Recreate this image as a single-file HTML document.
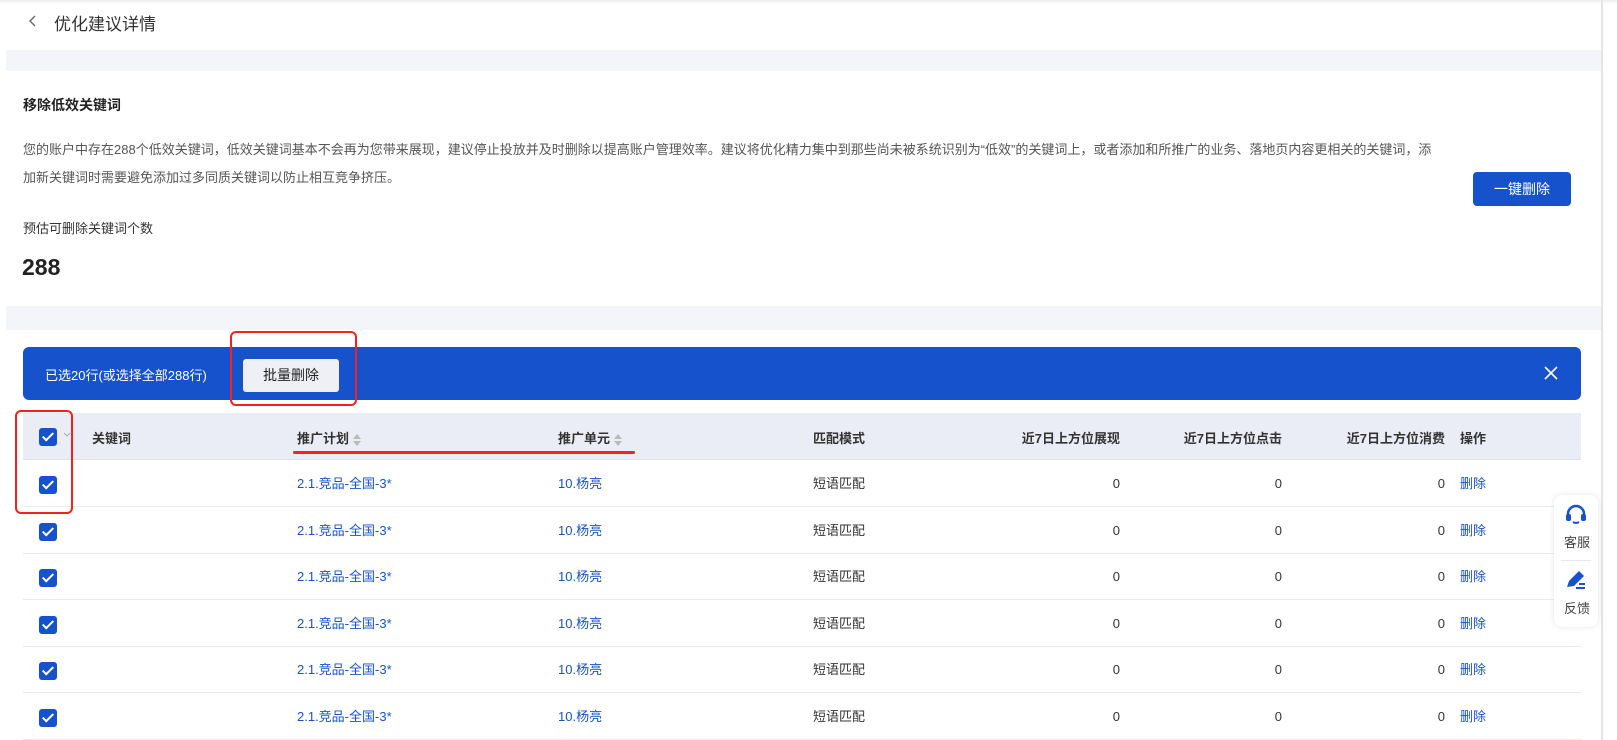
<!DOCTYPE html>
<html><head><meta charset="utf-8"><style>
*{margin:0;padding:0;box-sizing:border-box}
body{width:1617px;height:740px;overflow:hidden;background:#fff;font-family:"Liberation Sans","Noto Sans CJK SC",sans-serif;color:#333;position:relative}
.abs{position:absolute}
.band{position:absolute;left:6px;width:1595px;background:#f4f5f9}
.cb{position:absolute;width:18px;height:18px;background:#1652cc;border-radius:3px}
.cb:after{content:"";position:absolute;left:6px;top:2px;width:4px;height:9px;border:solid #fff;border-width:0 2px 2px 0;transform:rotate(45deg)}
.row{position:absolute;left:23px;width:1566px;height:47px;border-bottom:1px solid #e8ebf2;font-size:13px}
.row span{position:absolute;top:15px;line-height:17px}
.blue{color:#1652cc}
.num{text-align:right;width:100px}
.red{position:absolute;border:2px solid #f0241c;border-radius:6px}
.sort{display:inline-block;vertical-align:middle;margin-left:4px}
</style></head><body>
<div class="abs" style="left:0;top:0;width:1617px;height:4px;background:linear-gradient(#eee,#fff)"></div>
<svg class="abs" style="left:28px;top:14px" width="10" height="14"><path d="M7 2L2 7L7 12" fill="none" stroke="#666" stroke-width="1.4"/></svg>
<div class="abs" style="left:54px;top:10px;font-size:17px;color:#333">优化建议详情</div>
<div class="band" style="top:50px;height:21px"></div>
<div class="abs" style="left:23px;top:95px;font-size:14px;font-weight:bold;color:#222">移除低效关键词</div>
<div class="abs" style="left:23px;top:136px;width:1415px;font-size:13px;line-height:28px;color:#555">您的账户中存在288个低效关键词，低效关键词基本不会再为您带来展现，建议停止投放并及时删除以提高账户管理效率。建议将优化精力集中到那些尚未被系统识别为“低效”的关键词上，或者添加和所推广的业务、落地页内容更相关的关键词，添加新关键词时需要避免添加过多同质关键词以防止相互竞争挤压。</div>
<div class="abs" style="left:1473px;top:172px;width:98px;height:34px;background:#1652cc;border-radius:4px;color:#fff;font-size:14px;line-height:34px;text-align:center">一键删除</div>
<div class="abs" style="left:23px;top:218px;font-size:13px;color:#333">预估可删除关键词个数</div>
<div class="abs" style="left:22px;top:254px;font-size:23px;font-weight:bold;color:#222">288</div>
<div class="band" style="top:306px;height:24px"></div>
<div class="abs" style="left:1601px;top:0;width:2px;height:740px;background:#e4e4e4"></div>
<div class="abs" style="left:23px;top:347px;width:1558px;height:53px;background:#1652cc;border-radius:6px"></div>
<div class="abs" style="left:45px;top:365px;font-size:13px;color:#fff">已选20行(或选择全部288行)</div>
<div class="abs" style="left:243px;top:359px;width:96px;height:33px;background:#eef0f5;border-radius:3px;font-size:14px;line-height:33px;text-align:center;color:#222">批量删除</div>
<svg class="abs" style="left:1544px;top:366px" width="14" height="14"><path d="M1 1L13 13M13 1L1 13" stroke="#fff" stroke-width="1.6"/></svg>
<div class="abs" style="left:23px;top:413px;width:1558px;height:47px;background:#eaedf5;border-bottom:1px solid #dde2ee;font-size:13px;font-weight:bold;color:#333">
<div class="cb" style="left:16px;top:15px"></div>
<svg class="abs" style="left:40px;top:19px" width="8" height="6"><path d="M1 1L4 4L7 1" fill="none" stroke="#aaa"/></svg>
<span class="abs" style="left:69px;top:15px">关键词</span>
<span class="abs" style="left:274px;top:15px">推广计划<svg class="sort" width="8" height="12"><path d="M4 0L8 5H0Z M4 12L8 7H0Z" fill="#bbb"/></svg></span>
<span class="abs" style="left:535px;top:15px">推广单元<svg class="sort" width="8" height="12"><path d="M4 0L8 5H0Z M4 12L8 7H0Z" fill="#bbb"/></svg></span>
<span class="abs" style="left:790px;top:15px">匹配模式</span>
<span class="abs" style="left:945px;top:15px;width:152px;text-align:right">近7日上方位展现</span>
<span class="abs" style="left:1107px;top:15px;width:152px;text-align:right">近7日上方位点击</span>
<span class="abs" style="left:1270px;top:15px;width:152px;text-align:right">近7日上方位消费</span>
<span class="abs" style="left:1437px;top:15px">操作</span>
</div>
<div class="row" style="top:460px;width:1558px"><div class="cb" style="left:16px;top:16px"></div><span class="blue" style="left:274px">2.1.竞品-全国-3*</span><span class="blue" style="left:535px">10.杨亮</span><span style="left:790px">短语匹配</span><span class="num" style="left:997px">0</span><span class="num" style="left:1159px">0</span><span class="num" style="left:1322px">0</span><span class="blue" style="left:1437px">删除</span></div>
<div class="row" style="top:507px;width:1558px"><div class="cb" style="left:16px;top:16px"></div><span class="blue" style="left:274px">2.1.竞品-全国-3*</span><span class="blue" style="left:535px">10.杨亮</span><span style="left:790px">短语匹配</span><span class="num" style="left:997px">0</span><span class="num" style="left:1159px">0</span><span class="num" style="left:1322px">0</span><span class="blue" style="left:1437px">删除</span></div>
<div class="row" style="top:553px;width:1558px"><div class="cb" style="left:16px;top:16px"></div><span class="blue" style="left:274px">2.1.竞品-全国-3*</span><span class="blue" style="left:535px">10.杨亮</span><span style="left:790px">短语匹配</span><span class="num" style="left:997px">0</span><span class="num" style="left:1159px">0</span><span class="num" style="left:1322px">0</span><span class="blue" style="left:1437px">删除</span></div>
<div class="row" style="top:600px;width:1558px"><div class="cb" style="left:16px;top:16px"></div><span class="blue" style="left:274px">2.1.竞品-全国-3*</span><span class="blue" style="left:535px">10.杨亮</span><span style="left:790px">短语匹配</span><span class="num" style="left:997px">0</span><span class="num" style="left:1159px">0</span><span class="num" style="left:1322px">0</span><span class="blue" style="left:1437px">删除</span></div>
<div class="row" style="top:646px;width:1558px"><div class="cb" style="left:16px;top:16px"></div><span class="blue" style="left:274px">2.1.竞品-全国-3*</span><span class="blue" style="left:535px">10.杨亮</span><span style="left:790px">短语匹配</span><span class="num" style="left:997px">0</span><span class="num" style="left:1159px">0</span><span class="num" style="left:1322px">0</span><span class="blue" style="left:1437px">删除</span></div>
<div class="row" style="top:693px;width:1558px"><div class="cb" style="left:16px;top:16px"></div><span class="blue" style="left:274px">2.1.竞品-全国-3*</span><span class="blue" style="left:535px">10.杨亮</span><span style="left:790px">短语匹配</span><span class="num" style="left:997px">0</span><span class="num" style="left:1159px">0</span><span class="num" style="left:1322px">0</span><span class="blue" style="left:1437px">删除</span></div>
<div class="red" style="left:230px;top:331px;width:127px;height:75px"></div>
<div class="red" style="left:15px;top:410px;width:58px;height:104px"></div>
<div class="abs" style="left:293px;top:451px;width:342px;height:3px;background:#f0241c;border-radius:2px"></div>
<div class="abs" style="left:1554px;top:495px;width:44px;height:132px;background:#fff;border-radius:8px;box-shadow:0 0 6px rgba(0,0,0,.1)"></div>
<svg class="abs" style="left:1564px;top:503px" width="24" height="24" viewBox="0 0 24 24"><path d="M4 13V11a8 8 0 0 1 16 0v2" fill="none" stroke="#1652cc" stroke-width="2.5"/><rect x="2" y="11" width="5" height="7" rx="2" fill="#1652cc"/><rect x="17" y="11" width="5" height="7" rx="2" fill="#1652cc"/><path d="M9 19q3 2 6 0" stroke="#1652cc" stroke-width="2" fill="none"/></svg>
<div class="abs" style="left:1564px;top:532px;font-size:13px;color:#444">客服</div>
<div class="abs" style="left:1561px;top:560px;width:30px;height:1px;background:#e3e8f3"></div>
<svg class="abs" style="left:1564px;top:568px" width="24" height="24" viewBox="0 0 24 24"><path d="M3 19L5 13L15 3L20 8L10 18Z" fill="#1652cc"/><path d="M12 20H21M15 16H21" stroke="#1652cc" stroke-width="2"/></svg>
<div class="abs" style="left:1564px;top:598px;font-size:13px;color:#444">反馈</div>
</body></html>
